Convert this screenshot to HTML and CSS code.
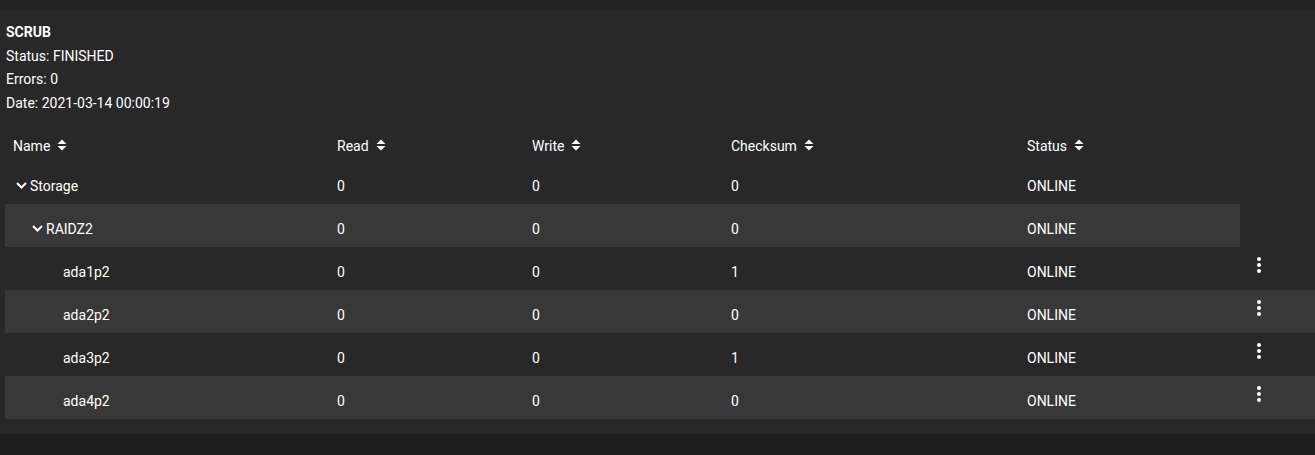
FILE: index.html
```html
<!DOCTYPE html>
<html lang="en">
<head>
<meta charset="utf-8">
<title>Pool Status</title>
<link rel="stylesheet" href="styles.css">
</head>
<body>
<div class="topband"></div>
<section class="panel">
  <div class="scrub">
    <div class="scrub-title">SCRUB</div>
    <div>Status: FINISHED</div>
    <div>Errors: 0</div>
    <div>Date: 2021-03-14 00:00:19</div>
  </div>

  <div class="table">
    <div class="row header">
      <div class="cell name-cell">Name <svg class="sort" viewBox="0 0 10 12"><path d="M0.5 5 L5 0.5 L9.5 5 Z M0.5 7 L9.5 7 L5 11.5 Z"/></svg></div>
      <div class="cell">Read <svg class="sort" viewBox="0 0 10 12"><path d="M0.5 5 L5 0.5 L9.5 5 Z M0.5 7 L9.5 7 L5 11.5 Z"/></svg></div>
      <div class="cell">Write <svg class="sort" viewBox="0 0 10 12"><path d="M0.5 5 L5 0.5 L9.5 5 Z M0.5 7 L9.5 7 L5 11.5 Z"/></svg></div>
      <div class="cell">Checksum <svg class="sort" viewBox="0 0 10 12"><path d="M0.5 5 L5 0.5 L9.5 5 Z M0.5 7 L9.5 7 L5 11.5 Z"/></svg></div>
      <div class="cell">Status <svg class="sort" viewBox="0 0 10 12"><path d="M0.5 5 L5 0.5 L9.5 5 Z M0.5 7 L9.5 7 L5 11.5 Z"/></svg></div>
    </div>

    <div class="row">
      <div class="cell name-cell level0"><span class="toggle"><svg viewBox="0 0 11 7"><path d="M1 1 L5.5 5.5 L10 1"/></svg></span>Storage</div>
      <div class="cell">0</div>
      <div class="cell">0</div>
      <div class="cell">0</div>
      <div class="cell">ONLINE</div>
    </div>

    <div class="row striped">
      <div class="cell name-cell level1"><span class="toggle"><svg viewBox="0 0 11 7"><path d="M1 1 L5.5 5.5 L10 1"/></svg></span>RAIDZ2</div>
      <div class="cell">0</div>
      <div class="cell">0</div>
      <div class="cell">0</div>
      <div class="cell">ONLINE</div>
    </div>

    <div class="row">
      <div class="cell name-cell level2">ada1p2</div>
      <div class="cell">0</div>
      <div class="cell">0</div>
      <div class="cell">1</div>
      <div class="cell">ONLINE</div>
      <div class="cell actions"><svg class="dots" viewBox="0 0 4 16"><circle cx="2" cy="2" r="2"/><circle cx="2" cy="8" r="2"/><circle cx="2" cy="14" r="2"/></svg></div>
    </div>

    <div class="row striped">
      <div class="cell name-cell level2">ada2p2</div>
      <div class="cell">0</div>
      <div class="cell">0</div>
      <div class="cell">0</div>
      <div class="cell">ONLINE</div>
      <div class="cell actions"><svg class="dots" viewBox="0 0 4 16"><circle cx="2" cy="2" r="2"/><circle cx="2" cy="8" r="2"/><circle cx="2" cy="14" r="2"/></svg></div>
    </div>

    <div class="row">
      <div class="cell name-cell level2">ada3p2</div>
      <div class="cell">0</div>
      <div class="cell">0</div>
      <div class="cell">1</div>
      <div class="cell">ONLINE</div>
      <div class="cell actions"><svg class="dots" viewBox="0 0 4 16"><circle cx="2" cy="2" r="2"/><circle cx="2" cy="8" r="2"/><circle cx="2" cy="14" r="2"/></svg></div>
    </div>

    <div class="row striped">
      <div class="cell name-cell level2">ada4p2</div>
      <div class="cell">0</div>
      <div class="cell">0</div>
      <div class="cell">0</div>
      <div class="cell">ONLINE</div>
      <div class="cell actions"><svg class="dots" viewBox="0 0 4 16"><circle cx="2" cy="2" r="2"/><circle cx="2" cy="8" r="2"/><circle cx="2" cy="14" r="2"/></svg></div>
    </div>
  </div>
</section>
</body>
</html>
```
FILE: styles.css
```css
* { box-sizing: border-box; }

html, body {
  margin: 0;
  padding: 0;
}

body {
  background: #1e1e1e;
  font-family: Roboto, "Liberation Sans", sans-serif;
  font-size: 14px;
  color: #ffffff;
  width: 1315px;
  height: 455px;
  overflow: hidden;
}

.topband {
  height: 11px;
  background: #232323;
}

.panel {
  background: #282828;
  padding: 10px 0 15px 5px;
}

.scrub {
  line-height: 23.7px;
  padding-left: 1px;
}

.scrub-title {
  font-weight: 700;
}

.table {
  margin-top: 10px;
}

.row {
  display: grid;
  grid-template-columns: 324px 195px 199px 296px 221px 1fr;
}

.cell {
  height: 43px;
  padding: 7px 0 0 8px;
  display: flex;
  align-items: center;
  white-space: nowrap;
}

.row.header .cell {
  height: 35px;
  padding-top: 6px;
}

.row.striped .cell {
  background: #383838;
}

.sort {
  width: 10px;
  height: 12px;
  margin-left: 7px;
  margin-top: -2px;
  fill: #ffffff;
}

.toggle {
  width: 18px;
  height: 14px;
  display: inline-flex;
  align-items: center;
  justify-content: center;
  flex: none;
  margin-left: -1px;
}

.toggle svg {
  width: 11px;
  height: 7px;
  fill: none;
  stroke: #ffffff;
  stroke-width: 2;
}

.level1 { padding-left: 24px; }
.level2 { padding-left: 58px; }

.actions {
  align-items: flex-start;
  padding: 10px 0 0 17px;
}

.dots {
  width: 4px;
  height: 16px;
  fill: #ffffff;
}
```
